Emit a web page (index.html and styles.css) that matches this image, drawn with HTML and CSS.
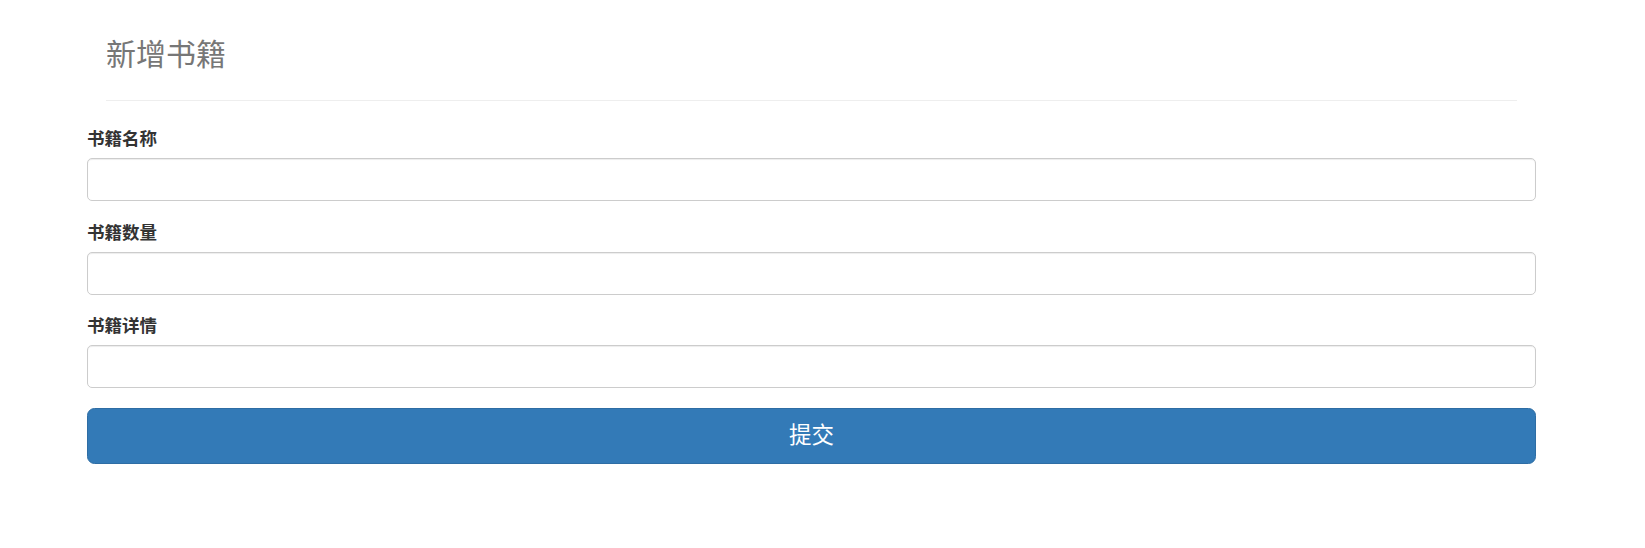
FILE: index.html
```html
<!DOCTYPE html>
<html lang="zh-CN">
<head>
<meta charset="utf-8">
<title>新增书籍</title>
<link rel="stylesheet" href="styles.css">
</head>
<body>
<div class="page">
  <div class="page-header">
    <h3 class="title">新增书籍</h3>
  </div>
  <form class="book-form">
    <div class="form-group">
      <label class="form-label" for="name">书籍名称</label>
      <input class="form-control" id="name" type="text">
    </div>
    <div class="form-group">
      <label class="form-label" for="count">书籍数量</label>
      <input class="form-control" id="count" type="text">
    </div>
    <div class="form-group">
      <label class="form-label" for="detail">书籍详情</label>
      <input class="form-control" id="detail" type="text">
    </div>
    <button class="btn-submit" type="button">提交</button>
  </form>
</div>
</body>
</html>
```

FILE: styles.css
```css
* {
  box-sizing: border-box;
}

html, body {
  margin: 0;
  padding: 0;
  background: #ffffff;
}

body {
  font-family: "Liberation Sans", "Noto Sans CJK SC", sans-serif;
  color: #333333;
}

.page {
  width: 1449px;
  margin-left: 87px;
}

.page-header {
  margin: 0 19px;
  padding-top: 38px;
  border-bottom: 1px solid #eeeeee;
  padding-bottom: 29px;
}

.title {
  margin: 0;
  font-size: 30px;
  line-height: 33px;
  font-weight: 400;
  color: #777777;
}

.book-form {
  display: flex;
  flex-direction: column;
  padding-top: 26px;
}

.form-group {
  display: flex;
  flex-direction: column;
  margin-bottom: 19.5px;
}

.form-label {
  display: block;
  font-size: 17.5px;
  line-height: 25px;
  font-weight: 700;
  color: #333333;
  margin-bottom: 6px;
}

.form-control {
  display: block;
  width: 100%;
  height: 43px;
  padding: 7px 15px;
  font-size: 17.5px;
  border: 1px solid #cccccc;
  border-radius: 5px;
  background: #ffffff;
  box-shadow: inset 0 1px 1px rgba(0, 0, 0, 0.075);
  outline: none;
}

.btn-submit {
  display: flex;
  align-items: center;
  justify-content: center;
  width: 100%;
  height: 56px;
  margin-top: 0.5px;
  padding: 0;
  font-family: "Liberation Sans", "Noto Sans CJK SC", sans-serif;
  font-size: 22.5px;
  line-height: 30px;
  color: #ffffff;
  background: #337ab7;
  border: 1px solid #2e6da4;
  border-radius: 7.5px;
  cursor: pointer;
}
```
